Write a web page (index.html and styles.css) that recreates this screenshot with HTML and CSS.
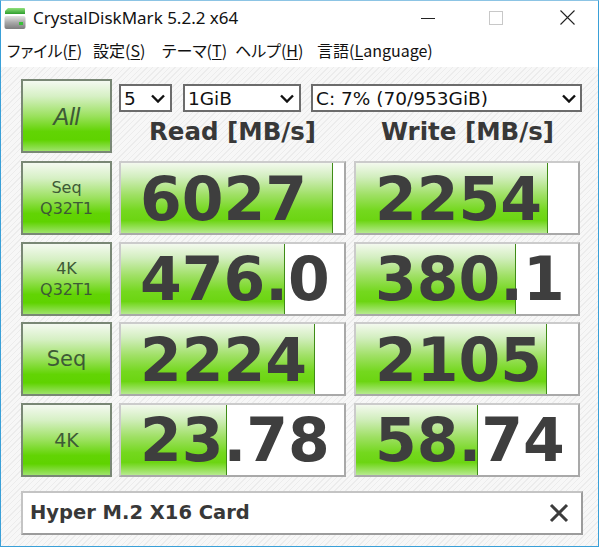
FILE: index.html
```html
<!DOCTYPE html>
<html lang="ja">
<head>
    <meta charset="UTF-8">
    <title>CrystalDiskMark 5.2.2 x64</title>
    <link rel="stylesheet" href="styles.css">
</head>
<body>
    <div class="window">
        <div class="titlebar">
            <svg class="app-icon" width="22" height="23" viewBox="0 0 22 23">
                <defs>
                    <linearGradient id="body" x1="0" y1="0" x2="0" y2="1">
                        <stop offset="0" stop-color="#e4e4e4"/>
                        <stop offset="0.5" stop-color="#a9a9a9"/>
                        <stop offset="1" stop-color="#7c7c7c"/>
                    </linearGradient>
                    <linearGradient id="cap" x1="0" y1="0" x2="0" y2="1">
                        <stop offset="0" stop-color="#8fe07a"/>
                        <stop offset="1" stop-color="#2e9e2e"/>
                    </linearGradient>
                </defs>
                <path d="M4 1 H20 Q21 1 21 2 V7 H1 V4 Z" fill="url(#cap)"/>
                <rect x="0.5" y="9" width="21" height="13" rx="2" fill="url(#body)"/>
                <rect x="15" y="15" width="4" height="3" fill="#38c038"/>
            </svg>
            <span class="title">CrystalDiskMark 5.2.2 x64</span>
            <div class="win-controls">
                <svg width="14" height="14" viewBox="0 0 14 14"><line x1="0" y1="7.5" x2="14" y2="7.5" stroke="#222" stroke-width="1"/></svg>
                <svg width="14" height="14" viewBox="0 0 14 14"><rect x="0.5" y="0.5" width="13" height="13" fill="none" stroke="#c8c8c8" stroke-width="1"/></svg>
                <svg width="15" height="15" viewBox="0 0 15 15"><path d="M0.5 0.5 L14.5 14.5 M14.5 0.5 L0.5 14.5" stroke="#222" stroke-width="1.1"/></svg>
            </div>
        </div>

        <div class="menubar">
            <span class="menu-file">ファイル(<u>F</u>)</span>
            <span class="menu-settings">設定(<u>S</u>)</span>
            <span class="menu-theme">テーマ(<u>T</u>)</span>
            <span class="menu-help">ヘルプ(<u>H</u>)</span>
            <span>言語(<u>L</u>anguage)</span>
        </div>

        <div class="main">
            <div class="top">
                <div class="btn btn-all">All</div>
                <div class="settings">
                    <div class="selects">
                        <div class="select sel-count">
                            <span>5</span>
                            <svg width="14" height="9" viewBox="0 0 14 9"><polyline points="1,1.5 7,7.5 13,1.5" fill="none" stroke="#111" stroke-width="2.4"/></svg>
                        </div>
                        <div class="select sel-size">
                            <span>1GiB</span>
                            <svg width="14" height="9" viewBox="0 0 14 9"><polyline points="1,1.5 7,7.5 13,1.5" fill="none" stroke="#111" stroke-width="2.4"/></svg>
                        </div>
                        <div class="select sel-drive">
                            <span>C: 7% (70/953GiB)</span>
                            <svg width="14" height="9" viewBox="0 0 14 9"><polyline points="1,1.5 7,7.5 13,1.5" fill="none" stroke="#111" stroke-width="2.4"/></svg>
                        </div>
                    </div>
                    <div class="headers">
                        <div>Read [MB/s]</div>
                        <div>Write [MB/s]</div>
                    </div>
                </div>
            </div>

            <div class="rows">
                <div class="row">
                    <div class="btn btn-two"><span>Seq</span><span>Q32T1</span></div>
                    <div class="bar"><div class="fill" style="width: 95%"></div><span class="value">6027</span></div>
                    <div class="bar"><div class="fill" style="width: 86.5%"></div><span class="value">2254</span></div>
                </div>
                <div class="row">
                    <div class="btn btn-two"><span>4K</span><span>Q32T1</span></div>
                    <div class="bar"><div class="fill" style="width: 73.5%"></div><span class="value">476.0</span></div>
                    <div class="bar"><div class="fill" style="width: 72%"></div><span class="value">380.1</span></div>
                </div>
                <div class="row">
                    <div class="btn btn-seq">Seq</div>
                    <div class="bar"><div class="fill" style="width: 87%"></div><span class="value">2224</span></div>
                    <div class="bar"><div class="fill" style="width: 86%"></div><span class="value">2105</span></div>
                </div>
                <div class="row">
                    <div class="btn btn-4k">4K</div>
                    <div class="bar"><div class="fill" style="width: 47.5%"></div><span class="value">23.78</span></div>
                    <div class="bar"><div class="fill" style="width: 55%"></div><span class="value">58.74</span></div>
                </div>
            </div>

            <div class="comment">
                <span>Hyper M.2 X16 Card</span>
                <svg width="20" height="20" viewBox="0 0 20 20"><path d="M2 2 L18 18 M18 2 L2 18" stroke="#3c3c3c" stroke-width="3"/></svg>
            </div>
        </div>
    </div>
</body>
</html>
```

FILE: styles.css
```css
* {
    margin: 0;
    padding: 0;
    box-sizing: border-box;
}

body {
    background-color: #ffffff;
    font-family: "DejaVu Sans", sans-serif;
}

.window {
    width: 599px;
    height: 547px;
    border: 1px solid #3aa0d8;
    border-top-color: #8cc4e4;
    background-color: white;
    display: flex;
    flex-direction: column;
}

/* barra de titulo */
.titlebar {
    height: 33px;
    display: flex;
    align-items: center;
    padding-left: 3px;
}

.app-icon {
    margin-top: 1px;
}

.title {
    margin-left: 7px;
    font-family: "Noto Sans", sans-serif;
    font-size: 17px;
    color: #111;
}

.win-controls {
    margin-left: auto;
    margin-right: 23px;
    display: flex;
    align-items: center;
    gap: 54px;
}

.win-controls svg:last-child {
    margin-left: 3px;
}

.menubar {
    height: 33px;
    display: flex;
    align-items: center;
    padding-left: 6px;
    padding-bottom: 2px;
    font-family: "Noto Sans CJK JP", sans-serif;
    font-size: 16px;
    font-feature-settings: "palt";
    color: #111;
}

.menu-file {
    width: 86px;
}

.menu-settings {
    width: 69px;
}

.menu-theme {
    width: 73px;
}

.menu-help {
    width: 82px;
}

.menubar u {
    text-underline-offset: 2px;
}

/* zona principal */
.main {
    flex: 1;
    padding: 12px 16px 0 20px;
    background: repeating-linear-gradient(135deg, #f7f7f7 0, #f7f7f7 3px, #ececec 3px, #ececec 4px);
}

.top {
    display: grid;
    grid-template-columns: 91px 1fr;
    column-gap: 7px;
    height: 74px;
    margin-bottom: 8px;
}

.btn {
    border: 2px solid #798775;
    background: linear-gradient(to bottom, #f4f9f1 0%, #d6f0c4 22%, #9be15e 50%, #62d404 72%, #5fd300 84%, #9ee36a 100%);
    color: #3d5a36;
    display: flex;
    flex-direction: column;
    align-items: center;
    justify-content: center;
}

.btn-all {
    font-family: "Liberation Sans", sans-serif;
    font-style: italic;
    font-size: 24px;
    padding-top: 2px;
}

.btn-two {
    font-size: 16px;
    line-height: 21px;
}

.btn-seq {
    font-size: 21px;
}

.btn-4k {
    font-size: 19px;
}

.selects {
    display: flex;
    margin-top: 5px;
    height: 28px;
}

.select {
    display: flex;
    align-items: center;
    justify-content: space-between;
    border: 2px solid #6c6c6c;
    background-color: white;
    padding: 0 5px 0 3px;
    font-size: 18.5px;
    color: #111;
}

.sel-count {
    width: 53px;
}

.sel-size {
    width: 118px;
    margin-left: 11px;
}

.sel-drive {
    width: 271px;
    margin-left: 10px;
    margin-right: -1px;
    padding-right: 4px;
}

.headers {
    display: grid;
    grid-template-columns: 227px 227px;
    column-gap: 8px;
    height: 41px;
    align-items: center;
    padding-bottom: 2px;
}

.headers div {
    text-align: center;
    font-weight: bold;
    font-size: 24.5px;
    color: #383838;
}

/* filas de resultados */
.rows {
    display: flex;
    flex-direction: column;
    gap: 6.67px;
}

.row {
    display: grid;
    grid-template-columns: 91px 227px 227px;
    column-gap: 7px;
    height: 74px;
}

.row .bar:last-child {
    margin-left: 1px;
}

.bar {
    position: relative;
    border: 2px solid;
    border-color: #cbcbcb #a9a9a9 #a9a9a9 #cbcbcb;
    background-color: white;
    display: flex;
    align-items: center;
    padding-left: 19px;
    overflow: hidden;
}

.fill {
    position: absolute;
    left: 0;
    top: 0;
    bottom: 0;
    border-right: 1px solid #3f8c16;
    background: linear-gradient(to bottom, #f3f9ee 0%, #d2eebe 20%, #a0e066 45%, #74d81e 68%, #6cd512 82%, #b6ea8e 100%);
}

.value {
    position: relative;
    font-weight: bold;
    font-size: 60px;
    color: #3e3e3e;
    padding-top: 1px;
}

.comment {
    margin-top: 14px;
    width: 562px;
    height: 44px;
    border: 2px solid;
    border-color: #c4c4c4 #9c9c9c #9c9c9c #c4c4c4;
    background-color: white;
    display: flex;
    align-items: center;
    justify-content: space-between;
    padding: 0 12px 0 7px;
}

.comment span {
    font-weight: bold;
    font-size: 19.5px;
    color: #383838;
}
```
